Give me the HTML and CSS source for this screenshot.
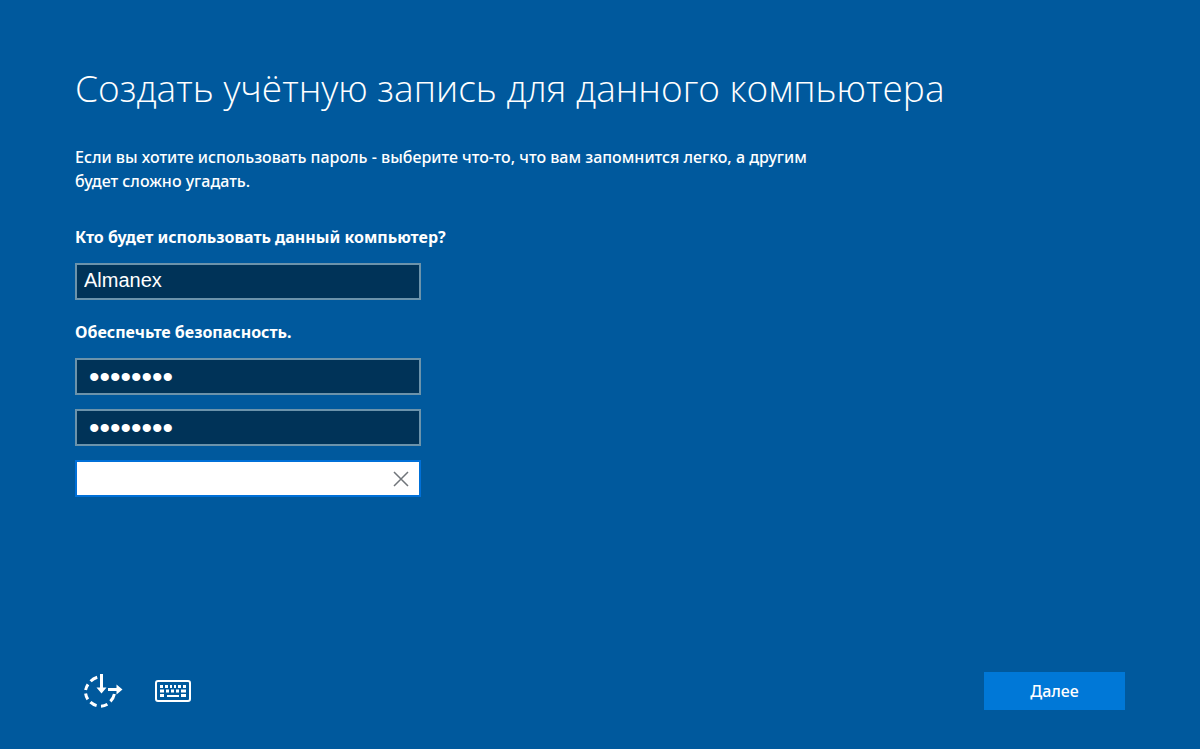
FILE: index.html
```html
<!DOCTYPE html>
<html lang="ru">
<head>
<meta charset="utf-8">
<title>Создать учётную запись</title>
<link rel="stylesheet" href="styles.css">
</head>
<body>
<form class="setup">
  <main class="content">
    <h1 class="title">Создать учётную запись для данного компьютера</h1>
    <p class="intro">Если вы хотите использовать пароль - выберите что-то, что вам запомнится легко, а другим будет сложно угадать.</p>
    <section class="group">
      <label class="group-label" for="user">Кто будет использовать данный компьютер?</label>
      <input class="field" id="user" type="text" value="Almanex">
    </section>
    <section class="group">
      <label class="group-label" for="pass">Обеспечьте безопасность.</label>
      <div class="stack">
        <input class="field secret" id="pass" type="password" value="password">
        <input class="field secret" type="password" value="password" aria-label="Повторите пароль">
        <div class="hint">
          <input class="hint-input" type="text" aria-label="Подсказка для пароля">
          <button class="clear" type="button" aria-label="Очистить">
            <svg class="clear-icon" viewBox="0 0 16 16"><path d="M1 1L15 15M15 1L1 15"/></svg>
          </button>
        </div>
      </div>
    </section>
  </main>
  <footer class="bar">
    <div class="tools">
      <button class="tool" type="button" aria-label="Специальные возможности">
        <svg class="access-icon" viewBox="0 0 40 36" fill="none" stroke="currentColor" stroke-width="3">
          <path d="M14.2 4.2A15 15 0 0 0 7.6 8.2M5 11.3A15 15 0 0 0 2.6 17M2.6 20.5A15 15 0 0 0 4.8 26.4M7.4 29.2A15 15 0 0 0 13.6 32.6M18 33.2A15 15 0 0 0 24.4 31.2M27.4 28.4A15 15 0 0 0 31.4 21"/>
          <path d="M18.5 1V16M25 16.5H35"/>
          <path d="M13.5 14.5H23.5L18.5 20.5ZM33.5 11.5V21.5L39.5 16.5Z" fill="currentColor" stroke="none"/>
        </svg>
      </button>
      <button class="tool" type="button" aria-label="Экранная клавиатура">
        <svg class="keyboard-icon" viewBox="0 0 36 22" fill="none" stroke="currentColor">
          <rect x="1" y="1" width="34" height="20" rx="2" stroke-width="2"/>
          <path stroke-width="3" d="M5 6.5h3M10 6.5h3M15 6.5h2M19 6.5h2M23 6.5h3M28 6.5h3M5 11h4M11 11h3M16 11h3M21 11h3M26 11h5M5 15.5h4M26 15.5h5"/>
          <path stroke-width="2" d="M12 16h12"/>
        </svg>
      </button>
    </div>
    <button class="next" type="submit">Далее</button>
  </footer>
</form>
</body>
</html>
```
FILE: styles.css
```css
* { box-sizing: border-box; }
body {
  margin: 0;
  background: #00599d;
  color: #fff;
  font-family: "Noto Sans", "Open Sans", sans-serif;
}
.setup {
  min-height: 100vh;
  padding: 61px 75px 39px;
  display: flex;
  flex-direction: column;
  justify-content: space-between;
  gap: 32px;
}
.content {
  display: flex;
  flex-direction: column;
  align-items: flex-start;
}
.title {
  margin: 0 0 30px;
  font-family: "Open Sans", sans-serif;
  font-size: 37px;
  line-height: 54px;
  font-weight: 300;
}
.intro {
  margin: 0 0 32px;
  max-width: 760px;
  font-size: 16px;
  line-height: 24px;
  font-weight: 500;
}
.group {
  width: 100%;
  max-width: 346px;
  display: flex;
  flex-direction: column;
  gap: 14px;
  margin-bottom: 20px;
}
.group-label {
  font-size: 16px;
  line-height: 24px;
  font-weight: 700;
  white-space: nowrap;
}
.stack {
  display: flex;
  flex-direction: column;
  gap: 14px;
}
.field {
  width: 100%;
  height: 37px;
  padding: 0 7px 2px;
  border: 2px solid #6b93ab;
  background: #003358;
  color: #fff;
  font-family: "Liberation Sans", Arial, sans-serif;
  font-size: 20px;
}
.secret {
  padding: 0 12px;
  font-size: 30px;
}
.field:focus, .hint-input:focus { outline: none; }
.hint {
  display: flex;
  height: 37px;
  border: 2px solid #0070d8;
  background: #fff;
}
.hint-input {
  flex: 1;
  min-width: 0;
  border: 0;
  padding: 0 7px;
  background: none;
  font-size: 20px;
}
.clear {
  width: 36px;
  padding: 0;
  border: 0;
  background: none;
  display: grid;
  place-items: center;
}
.clear-icon {
  width: 16px;
  height: 16px;
  stroke: #70757a;
  stroke-width: 1.5;
}
.bar {
  display: flex;
  align-items: center;
  justify-content: space-between;
}
.tools {
  display: flex;
  align-items: center;
  gap: 32px;
  padding-left: 8px;
}
.tool {
  display: block;
  padding: 0;
  border: 0;
  background: none;
  color: #fff;
}
.tool svg { display: block; }
.access-icon { width: 40px; height: 36px; }
.keyboard-icon { width: 36px; height: 22px; }
.next {
  width: 141px;
  height: 38px;
  padding: 0;
  border: 0;
  background: #0078d7;
  color: #fff;
  font-family: "Noto Sans", sans-serif;
  font-size: 16px;
  font-weight: 500;
}
```
